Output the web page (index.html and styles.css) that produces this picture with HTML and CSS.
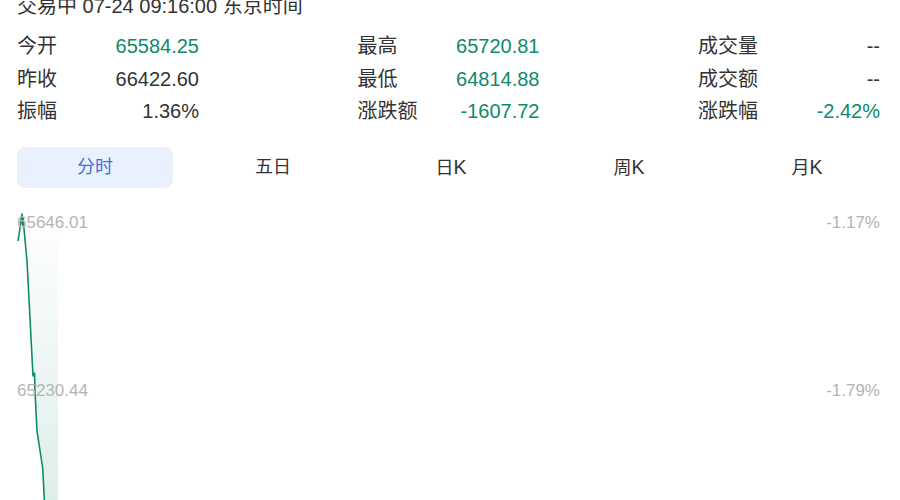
FILE: index.html
```html
<!DOCTYPE html>
<html lang="zh-CN">
<head>
  <meta charset="UTF-8">
  <title>行情</title>
  <link rel="stylesheet" href="styles.css">
</head>
<body>
  <div class="status">交易中 07-24 09:16:00 东京时间</div>

  <!-- Quote stats -->
  <div class="stats">
    <div class="stat-col">
      <div class="stat"><span class="label">今开</span><span class="val up">65584.25</span></div>
      <div class="stat"><span class="label">昨收</span><span class="val">66422.60</span></div>
      <div class="stat"><span class="label">振幅</span><span class="val">1.36%</span></div>
    </div>
    <div class="stat-col">
      <div class="stat"><span class="label">最高</span><span class="val up">65720.81</span></div>
      <div class="stat"><span class="label">最低</span><span class="val up">64814.88</span></div>
      <div class="stat"><span class="label">涨跌额</span><span class="val up">-1607.72</span></div>
    </div>
    <div class="stat-col">
      <div class="stat"><span class="label">成交量</span><span class="val">--</span></div>
      <div class="stat"><span class="label">成交额</span><span class="val">--</span></div>
      <div class="stat"><span class="label">涨跌幅</span><span class="val up">-2.42%</span></div>
    </div>
  </div>

  <!-- Period tabs -->
  <div class="tabs">
    <div class="tab active">分时</div>
    <div class="tab">五日</div>
    <div class="tab">日<span class="num">K</span></div>
    <div class="tab">周<span class="num">K</span></div>
    <div class="tab">月<span class="num">K</span></div>
  </div>

  <!-- Intraday chart -->
  <div class="chart">
    <svg class="chart-svg" width="863" height="300" viewBox="0 0 863 300">
      <defs>
        <linearGradient id="fill" x1="0" y1="0" x2="0" y2="1">
          <stop offset="0" stop-color="#0e8a6c" stop-opacity="0"/>
          <stop offset="0.2" stop-color="#0e8a6c" stop-opacity="0.03"/>
          <stop offset="1" stop-color="#0e8a6c" stop-opacity="0.14"/>
        </linearGradient>
      </defs>
      <path d="M6,16 L10,60 L16,175 L17.5,172 L18,190 L20,230 L25.7,267 L27.3,300 L41,300 L41,16 Z" fill="url(#fill)"/>
      <path d="M1,40 L3,27 L4,20 L5,13 L5.6,24 L6,17 L10,60 L16,175 L17.5,172 L18,190 L20,230 L25.7,267 L27.5,302" fill="none" stroke="#0e8a6c" stroke-width="1.6" stroke-linejoin="round"/>
    </svg>
    <span class="axis left top">65646.01</span>
    <span class="axis left mid">65230.44</span>
    <span class="axis right top">-1.17%</span>
    <span class="axis right mid">-1.79%</span>
  </div>
</body>
</html>
```

FILE: styles.css
```css
body {
  margin: 0;
  padding: 0 20px 0 17px;
  font-family: "Liberation Sans", Arial, "Noto Sans CJK SC", sans-serif;
  font-size: 20px;
  color: #333;
  background: #fff;
  overflow: hidden;
}
.status {
  line-height: 24px;
  margin-top: -6px;
}
.stats {
  display: flex;
  justify-content: space-between;
  margin-top: 12px;
}
.stat-col {
  width: 182px;
}
.stat {
  display: flex;
  justify-content: space-between;
  align-items: baseline;
  line-height: 32.5px;
  height: 32.5px;
}
.val {
  color: #333;
}
.val.up {
  color: #0e8a6c;
}
.tabs {
  display: grid;
  grid-template-columns: repeat(5, 156px);
  column-gap: 22px;
  margin-top: 19px;
}
.tab {
  height: 41px;
  line-height: 41px;
  text-align: center;
  font-size: 18px;
  color: #333;
  border-radius: 8px;
}
.tab .num {
  font-size: 19.5px;
}
.tab.active {
  background: #e8f1fd;
  color: #4a6cd8;
}
.chart {
  position: relative;
  height: 300px;
  margin-top: 13px;
}
.chart-svg {
  display: block;
}
.axis {
  position: absolute;
  font-size: 17px;
  line-height: 18px;
  color: #b4b4b4;
}
.axis.left { left: 0; }
.axis.right { right: 0; }
.axis.top { top: 13px; }
.axis.mid { top: 181px; }
```
